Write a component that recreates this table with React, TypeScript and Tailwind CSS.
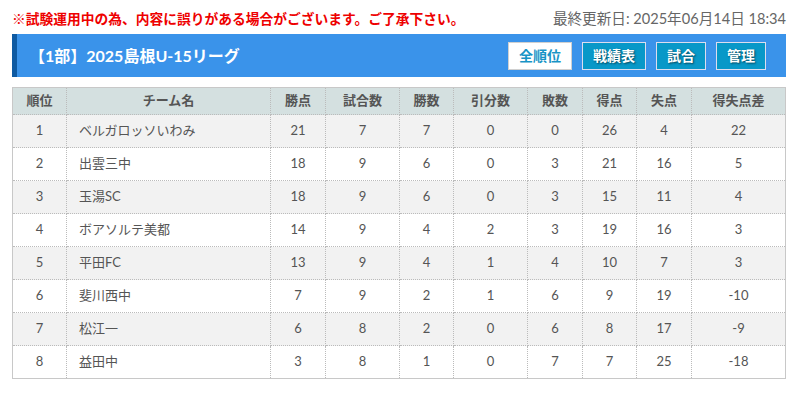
const rows = [
  { rank: 1, team: 'ベルガロッソいわみ', pts: 21, played: 7, win: 7, draw: 0, lose: 0, gf: 26, ga: 4, gd: '22' },
  { rank: 2, team: '出雲三中', pts: 18, played: 9, win: 6, draw: 0, lose: 3, gf: 21, ga: 16, gd: '5' },
  { rank: 3, team: '玉湯SC', pts: 18, played: 9, win: 6, draw: 0, lose: 3, gf: 15, ga: 11, gd: '4' },
  { rank: 4, team: 'ボアソルテ美都', pts: 14, played: 9, win: 4, draw: 2, lose: 3, gf: 19, ga: 16, gd: '3' },
  { rank: 5, team: '平田FC', pts: 13, played: 9, win: 4, draw: 1, lose: 4, gf: 10, ga: 7, gd: '3' },
  { rank: 6, team: '斐川西中', pts: 7, played: 9, win: 2, draw: 1, lose: 6, gf: 9, ga: 19, gd: '-10' },
  { rank: 7, team: '松江一', pts: 6, played: 8, win: 2, draw: 0, lose: 6, gf: 8, ga: 17, gd: '-9' },
  { rank: 8, team: '益田中', pts: 3, played: 8, win: 1, draw: 0, lose: 7, gf: 7, ga: 25, gd: '-18' },
];

const heads = ['順位', 'チーム名', '勝点', '試合数', '勝数', '引分数', '敗数', '得点', '失点', '得失点差'];
const widths = [54, 204, 55, 74, 54, 74, 55, 54, 55, 94];

const font = { fontFamily: 'Lato, "Noto Sans CJK JP", sans-serif' };

const App = () => {
  return (
    <div className="h-[396px] w-[801px] bg-white pl-3" style={font}>
      <div className="w-[774px]">
        <div className="flex h-[34px] items-center justify-between pt-1">
          <p className="text-[13.75px] font-bold text-[#ee0000]">
            ※試験運用中の為、内容に誤りがある場合がございます。ご了承下さい。
          </p>
          <p className="text-[14.6px] text-[#666]">最終更新日: 2025年06月14日 18:34</p>
        </div>

        <div className="flex h-[43px] items-center justify-between border-l-[5px] border-[#0e5aa2] bg-[#3a93ea] pl-[12px] pr-5">
          <h2 className="text-[16px] font-bold text-white">【1部】2025島根U-15リーグ</h2>
          <div className="flex gap-[10px]">
            <button className="h-[28px] w-[64px] border border-[#d0d0d0] bg-white text-[14px] font-bold text-[#1894c6]">
              全順位
            </button>
            <button className="h-[28px] w-[64px] border border-[#dde] bg-[#0898c8] text-[14px] font-bold text-white [text-shadow:1px_1px_2px_rgba(0,0,0,0.55)]">
              戦績表
            </button>
            <button className="h-[28px] w-[50px] border border-[#dde] bg-[#0898c8] text-[14px] font-bold text-white [text-shadow:1px_1px_2px_rgba(0,0,0,0.55)]">
              試合
            </button>
            <button className="h-[28px] w-[50px] border border-[#dde] bg-[#0898c8] text-[14px] font-bold text-white [text-shadow:1px_1px_2px_rgba(0,0,0,0.55)]">
              管理
            </button>
          </div>
        </div>

        <table className="mt-[10px] w-[774px] table-fixed border-collapse border border-[#c8c8c8] text-[13px] text-[#555]">
          <colgroup>
            {widths.map((w, i) => (
              <col key={i} style={{ width: w }} />
            ))}
          </colgroup>
          <thead>
            <tr className="h-[27px] bg-[#d4e0e0]">
              {heads.map((h) => (
                <th key={h} className="border border-dotted border-[#bbb] font-bold">
                  {h}
                </th>
              ))}
            </tr>
          </thead>
          <tbody>
            {rows.map((r) => (
              <tr key={r.rank} className={`h-[33px] ${r.rank % 2 ? 'bg-[#f2f2f2]' : 'bg-white'}`}>
                <td className="border border-dotted border-[#bbb] text-center">{r.rank}</td>
                <td className="border border-dotted border-[#bbb] pl-3 text-left">{r.team}</td>
                <td className="border border-dotted border-[#bbb] text-center">{r.pts}</td>
                <td className="border border-dotted border-[#bbb] text-center">{r.played}</td>
                <td className="border border-dotted border-[#bbb] text-center">{r.win}</td>
                <td className="border border-dotted border-[#bbb] text-center">{r.draw}</td>
                <td className="border border-dotted border-[#bbb] text-center">{r.lose}</td>
                <td className="border border-dotted border-[#bbb] text-center">{r.gf}</td>
                <td className="border border-dotted border-[#bbb] text-center">{r.ga}</td>
                <td className="border border-dotted border-[#bbb] text-center">{r.gd}</td>
              </tr>
            ))}
          </tbody>
        </table>
      </div>
    </div>
  );
};

export default App;
